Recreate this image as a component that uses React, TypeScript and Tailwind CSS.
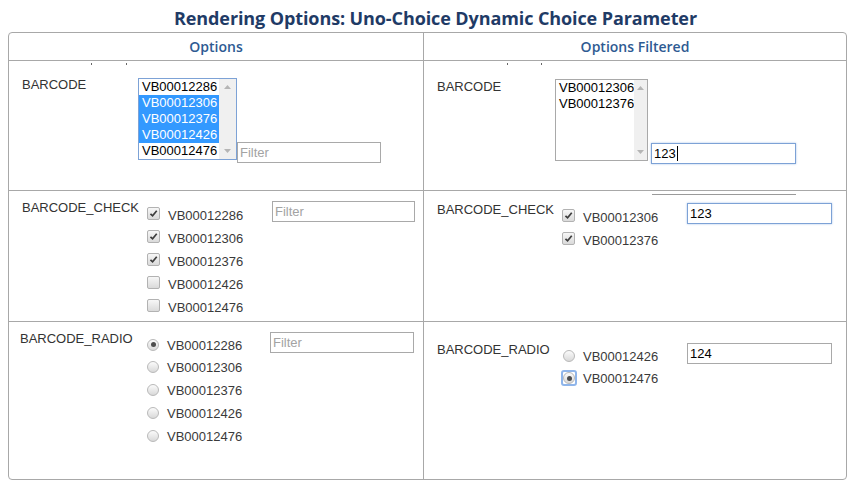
import React from "react";

const arial = "font-['Liberation_Sans',Arial,sans-serif]";

function TextBox({
  value,
  placeholder,
  focused,
  caret,
  className,
}: {
  value?: string;
  placeholder?: string;
  focused?: boolean;
  caret?: boolean;
  className: string;
}) {
  return (
    <div
      className={`flex h-[21px] shrink-0 items-center border bg-white pl-[2px] text-[13px] leading-[15px] ${arial} ${
        focused ? "border-[#7da2d6] shadow-[0_0_2px_#a9c4e8]" : "border-[#a9a9a9]"
      } ${className}`}
    >
      {value ? (
        <span className="text-black">{value}</span>
      ) : (
        <span className="text-[#a3a3a3]">{placeholder}</span>
      )}
      {caret && <span className="ml-px h-[15px] w-px bg-black" />}
    </div>
  );
}

function ListBox({
  items,
  selected = [],
  focused,
  className,
}: {
  items: string[];
  selected?: string[];
  focused?: boolean;
  className: string;
}) {
  return (
    <div
      className={`flex h-[82px] shrink-0 border bg-white ${focused ? "border-[#7da2d6]" : "border-[#a9a9a9]"} ${className}`}
    >
      <div className="flex-1">
        {items.map((item) => (
          <div
            key={item}
            className={`h-[16px] pl-[3px] text-[13px] leading-[16px] ${arial} ${
              selected.includes(item) ? "bg-[#3399ff] text-white" : "text-black"
            }`}
          >
            {item}
          </div>
        ))}
      </div>
      <div className="flex w-[17px] flex-col items-center justify-between bg-[#f0f0f0] py-[6px]">
        <svg width="7" height="4" viewBox="0 0 7 4">
          <path d="M0 4 L3.5 0 L7 4 Z" fill="#b5b5b5" />
        </svg>
        <svg width="7" height="4" viewBox="0 0 7 4">
          <path d="M0 0 L7 0 L3.5 4 Z" fill="#b5b5b5" />
        </svg>
      </div>
    </div>
  );
}

function CheckBox({ checked }: { checked: boolean }) {
  return (
    <span className="mt-[3px] flex h-[13px] w-[13px] shrink-0 items-center justify-center rounded-[2px] border border-[#b2b2b2] bg-linear-to-b from-[#f7f7f7] to-[#dadada]">
      {checked && (
        <svg width="9" height="9" viewBox="0 0 10 10">
          <path d="M1.6 5.3 L4 7.6 L8.6 2" fill="none" stroke="#3d3d3d" strokeWidth="1.9" />
        </svg>
      )}
    </span>
  );
}

function Radio({ checked, focused }: { checked: boolean; focused?: boolean }) {
  const dot = (
    <span className="flex h-[12px] w-[12px] shrink-0 items-center justify-center rounded-full border border-[#b9b9b9] bg-linear-to-b from-[#fbfbfb] to-[#d9d9d9]">
      {checked && <span className="h-[5px] w-[5px] rounded-full bg-[#4d4d4d]" />}
    </span>
  );
  if (focused) {
    return (
      <span className="-ml-[2px] mt-[2px] flex h-[16px] w-[16px] shrink-0 items-center justify-center rounded-[3px] border-2 border-[#8fb5ea]">
        {dot}
      </span>
    );
  }
  return <span className="mt-[4px] shrink-0">{dot}</span>;
}

function CheckList({ items, checked }: { items: string[]; checked: string[] }) {
  return (
    <div className="mt-[4px] flex w-[125px] shrink-0 flex-col">
      {items.map((item) => (
        <div key={item} className="flex h-[23px] items-start gap-[8px]">
          <CheckBox checked={checked.includes(item)} />
          <span className={`text-[13px] leading-[23px] text-[#3a3a3a] ${arial}`}>{item}</span>
        </div>
      ))}
    </div>
  );
}

function RadioList({
  items,
  checked,
  focusedItem,
  className,
}: {
  items: string[];
  checked: string;
  focusedItem?: string;
  className: string;
}) {
  return (
    <div className={`mt-[3.5px] flex shrink-0 flex-col ${className}`}>
      {items.map((item) => (
        <div key={item} className="flex h-[22.75px] items-start gap-[8px]">
          <Radio checked={item === checked} focused={item === focusedItem} />
          <span className={`text-[13px] leading-[22.5px] text-[#3a3a3a] ${item === focusedItem ? "-ml-[2px]" : ""} ${arial}`}>
            {item}
          </span>
        </div>
      ))}
    </div>
  );
}

function Label({ text, className }: { text: string; className: string }) {
  return <div className={`shrink-0 text-[13px] leading-[15px] text-[#333] ${arial} ${className}`}>{text}</div>;
}

const all = ["VB00012286", "VB00012306", "VB00012376", "VB00012426", "VB00012476"];

export default function App() {
  return (
    <div className="min-h-screen bg-white">
      <h1 className="h-[32px] pt-[6px] pl-[9px] text-center font-['Open_Sans',sans-serif] text-[18px] font-bold leading-[24px] tracking-[-0.1px] text-[#1f3b66]">
        Rendering Options: Uno-Choice Dynamic Choice Parameter
      </h1>

      <div className="ml-[8px] grid h-[448px] w-[839px] grid-cols-[415px_1fr] grid-rows-[28px_130px_131px_157px] rounded-[4px] border border-[#a8a8a8]">
        {/* header */}
        <div className="flex items-center justify-center border-r border-b border-[#a8a8a8] font-['Open_Sans',sans-serif] text-[14px] font-semibold text-[#2e5a92]">
          Options
        </div>
        <div className="flex items-center justify-center border-b border-[#a8a8a8] font-['Open_Sans',sans-serif] text-[14px] font-semibold text-[#2e5a92]">
          Options Filtered
        </div>

        {/* select */}
        <div className="relative flex items-start border-r border-b border-[#a8a8a8] pt-[16px] pl-[13px]">
          <span className="absolute top-[2px] left-[82px] h-[2px] w-px bg-[#666]" />
          <span className="absolute top-[2px] left-[117px] h-[2px] w-px bg-[#666]" />
          <Label text="BARCODE" className="w-[116px]" />
          <ListBox
            items={all}
            selected={["VB00012306", "VB00012376", "VB00012426"]}
            focused
            className="mt-px w-[99px]"
          />
          <TextBox placeholder="Filter" className="mt-[65px] w-[144px]" />
        </div>
        <div className="relative flex items-start border-b border-[#a8a8a8] pt-[18px] pl-[13px]">
          <span className="absolute top-[2px] left-[83px] h-[2px] w-px bg-[#666]" />
          <span className="absolute top-[2px] left-[117px] h-[2px] w-px bg-[#666]" />
          <Label text="BARCODE" className="w-[118px]" />
          <ListBox items={["VB00012306", "VB00012376"]} className="w-[93px]" />
          <TextBox value="123" focused caret className="mt-[64px] ml-[3px] w-[145px]" />
        </div>

        {/* checkboxes */}
        <div className="flex items-start border-r border-b border-[#a8a8a8] pt-[9px] pl-[13px]">
          <Label text="BARCODE_CHECK" className="w-[125px]" />
          <CheckList items={all} checked={["VB00012286", "VB00012306", "VB00012376"]} />
          <TextBox placeholder="Filter" className="mt-px w-[143px]" />
        </div>
        <div className="relative flex items-start border-b border-[#a8a8a8] pt-[11px] pl-[13px]">
          <span className="absolute top-[3px] left-[228px] h-px w-[144px] bg-[#9a9a9a]" />
          <Label text="BARCODE_CHECK" className="w-[125px]" />
          <CheckList items={["VB00012306", "VB00012376"]} checked={["VB00012306", "VB00012376"]} />
          <TextBox value="123" focused className="mt-px w-[145px]" />
        </div>

        {/* radios */}
        <div className="flex items-start border-r border-[#a8a8a8] pt-[9px] pl-[11px]">
          <Label text="BARCODE_RADIO" className="w-[127px]" />
          <RadioList items={all} checked="VB00012286" className="w-[123px]" />
          <TextBox placeholder="Filter" className="mt-px w-[144px]" />
        </div>
        <div className="flex items-start pt-[20px] pl-[13px]">
          <Label text="BARCODE_RADIO" className="w-[126px]" />
          <RadioList
            items={["VB00012426", "VB00012476"]}
            checked="VB00012476"
            focusedItem="VB00012476"
            className="w-[124px]"
          />
          <TextBox value="124" className="mt-px w-[145px]" />
        </div>
      </div>
    </div>
  );
}
